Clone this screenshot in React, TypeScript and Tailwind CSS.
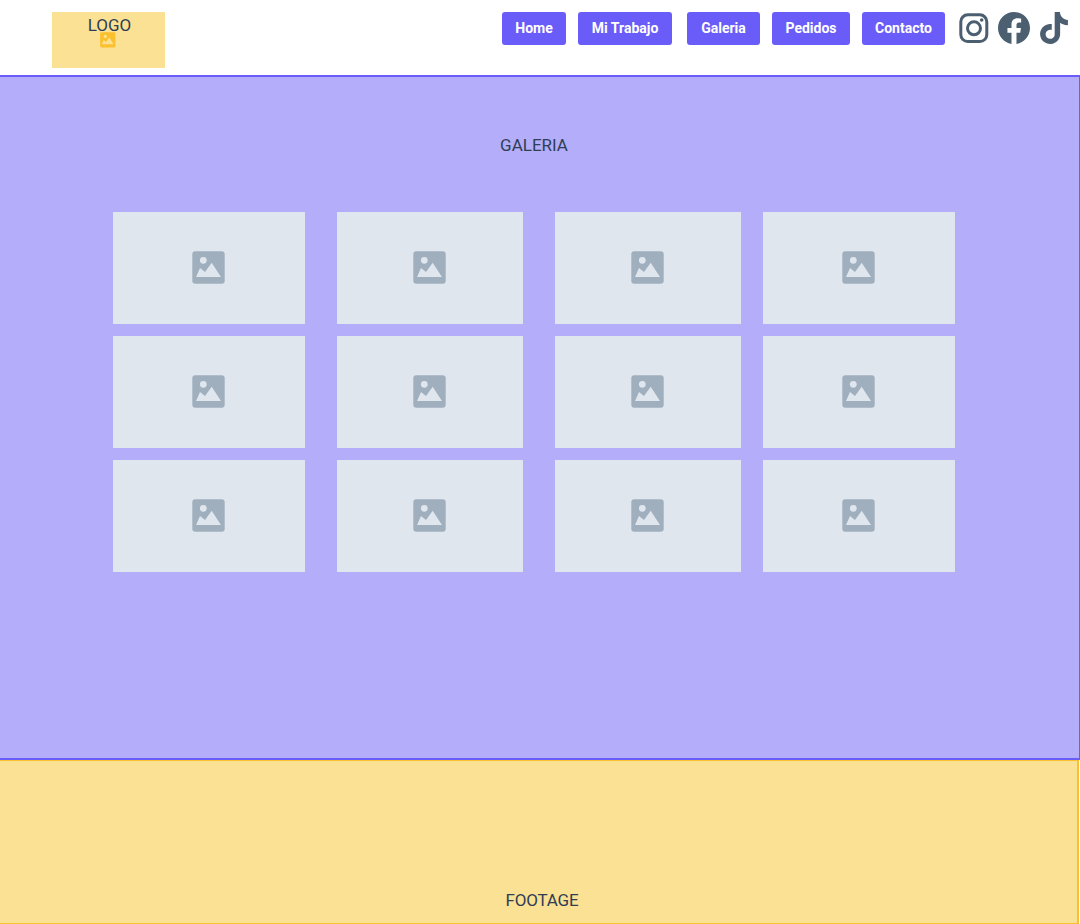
const navItems = [
  { label: 'Home', width: 'w-[64px]', margin: 'mr-3' },
  { label: 'Mi Trabajo', width: 'w-[94px]', margin: 'mr-[15px]' },
  { label: 'Galeria', width: 'w-[73px]', margin: 'mr-3' },
  { label: 'Pedidos', width: 'w-[78px]', margin: 'mr-3' },
  { label: 'Contacto', width: 'w-[83px]', margin: 'mr-0' },
]

const tileCols = ['w-[192px]', 'w-[186px]', 'w-[186px]', 'w-[192px]']

const ImageIcon = ({ className }: { className: string }) => (
  <svg viewBox="0 0 34 34" className={className} fill="currentColor">
    <path
      fillRule="evenodd"
      d="M3.3 .3h26.4a3 3 0 0 1 3 3v26.4a3 3 0 0 1-3 3H3.3a3 3 0 0 1-3-3V3.3a3 3 0 0 1 3-3ZM11.3 5.9a3.4 3.4 0 1 0 0 6.8 3.4 3.4 0 0 0 0-6.8ZM4 26h25L19.7 11.7 13 21 8 17 4 26Z"
    />
  </svg>
)

const App = () => {
  return (
    <div className="w-[1080px] h-[924px] bg-white text-[#2f3e55] font-['Roboto',sans-serif] overflow-hidden">
      {/* Header */}
      <header className="h-[75px] flex">
        <div className="ml-[52px] mt-3 w-[113px] h-14 bg-[#fbe193] flex flex-col items-center text-[17px] leading-[26px] pr-[1px]">
          <span className="ml-[3px]">LOGO</span>
          <ImageIcon className="w-4 h-4 -mt-[6px] text-[#fbc02d]" />
        </div>
        <nav className="ml-auto flex items-start pt-3">
          {navItems.map((item) => (
            <a
              key={item.label}
              className={`${item.width} ${item.margin} h-[33px] flex items-center justify-center rounded-[3px] bg-[#6a5cf8] text-white text-[14px] font-bold`}
            >
              {item.label}
            </a>
          ))}
          {/* Social icons */}
          <div className="flex items-center text-[#4b5f70] ml-[13px] mr-[10px] gap-2">
            <svg viewBox="0 0 32 32" className="w-8 h-8" fill="none" stroke="currentColor" strokeWidth="3">
              <rect x="2.8" y="2.8" width="26" height="26.7" rx="7" />
              <circle cx="16" cy="16.3" r="6.5" />
              <circle cx="23.7" cy="8" r="1.8" fill="currentColor" stroke="none" />
            </svg>
            <svg viewBox="0 0 24 24" className="w-8 h-8" fill="currentColor">
              <path d="M24 12.07C24 5.4 18.63 0 12 0S0 5.4 0 12.07c0 6.03 4.39 11.02 10.13 11.93v-8.44H7.08v-3.49h3.05V9.41c0-3.02 1.79-4.69 4.53-4.69 1.31 0 2.69.23 2.69.23v2.97h-1.52c-1.49 0-1.96.93-1.96 1.89v2.26h3.33l-.53 3.49h-2.8V24C19.61 23.09 24 18.1 24 12.07Z" />
            </svg>
            <svg viewBox="0 0 24 24" className="w-8 h-8" fill="currentColor">
              <path d="M12.53.02C13.84 0 15.14.01 16.44 0c.08 1.53.63 3.09 1.75 4.17 1.12 1.11 2.7 1.62 4.24 1.79v4.03c-1.44-.05-2.89-.35-4.2-.97-.57-.26-1.1-.59-1.62-.93-.01 2.92.01 5.84-.02 8.75-.08 1.4-.54 2.79-1.35 3.94-1.31 1.92-3.58 3.17-5.91 3.21-1.43.08-2.86-.31-4.08-1.03-2.02-1.19-3.44-3.37-3.65-5.71-.02-.5-.03-1-.01-1.49.18-1.9 1.12-3.72 2.58-4.96 1.66-1.44 3.98-2.13 6.15-1.72.02 1.48-.04 2.96-.04 4.44-.99-.32-2.15-.23-3.02.37-.63.41-1.11 1.04-1.36 1.75-.21.51-.15 1.07-.14 1.61.24 1.64 1.82 3.02 3.5 2.87 1.12-.01 2.19-.66 2.77-1.61.19-.33.4-.67.41-1.06.1-1.79.06-3.57.07-5.36.01-4.03-.01-8.05.02-12.07Z" />
            </svg>
          </div>
        </nav>
      </header>

      {/* Gallery */}
      <main className="h-[685px] bg-[#b3adfa] border-t-2 border-b-2 border-r border-[#6a5cf8]">
        <h1 className="pt-[58px] text-center text-[17px] leading-[20px] pr-[11px]">GALERIA</h1>
        <div className="mt-[57px] ml-[113px] grid grid-cols-[224px_218px_208px_192px] gap-y-3">
          {Array.from({ length: 12 }).map((_, i) => (
            <div key={i} className={`${tileCols[i % 4]} h-[112px] bg-[#e0e6ee] flex items-center justify-center`}>
              <ImageIcon className="w-[34px] h-[34px] text-[#a0afbd]" />
            </div>
          ))}
        </div>
      </main>

      {/* Footer */}
      <footer className="h-[164px] mr-[1px] bg-[#fbe193] border-t border-r-2 border-b border-[#fbc02d] flex items-end justify-center pb-[13px] pl-[7px] text-[17px] leading-[20px] tracking-[-0.2px]">
        FOOTAGE
      </footer>
    </div>
  )
}

export default App
